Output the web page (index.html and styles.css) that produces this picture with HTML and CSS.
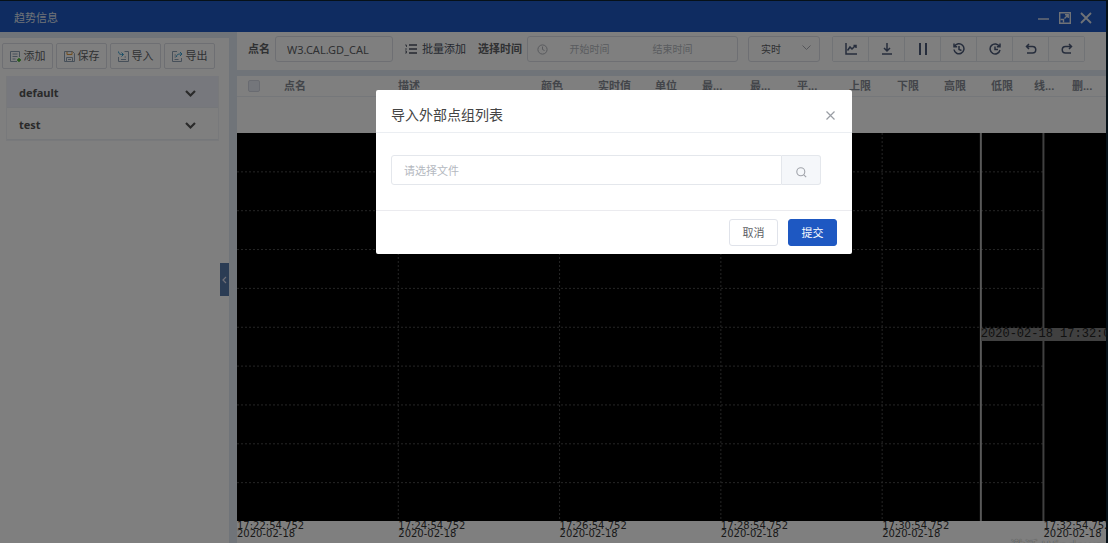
FILE: index.html
```html
<!DOCTYPE html>
<html lang="zh-CN">
<head>
<meta charset="utf-8">
<title>趋势信息</title>
<link rel="stylesheet" href="styles.css">
</head>
<body>
<div class="window">
  <header class="titlebar">
    <h1 class="title">趋势信息</h1>
    <div class="window-actions">
      <button class="bare" aria-label="最小化"><svg width="12" height="12" viewBox="0 0 12 12"><path d="M0 7h11" stroke="currentColor" stroke-width="1.4"/></svg></button>
      <button class="bare" aria-label="最大化"><svg width="12" height="12" viewBox="0 0 12 12"><path d="M.7.7h10.600v10.600H.7z" fill="none" stroke="currentColor" stroke-width="1.400"/><path d="M6 2.800h3.200V6M9 3L5.500 6.500M1.500 7.500h3v3" fill="none" stroke="currentColor" stroke-width="1.400"/></svg></button>
      <button class="bare" aria-label="关闭窗口"><svg width="12" height="12" viewBox="0 0 12 12"><path d="M1 1l10 10M11 1L1 11" stroke="currentColor" stroke-width="1.8"/></svg></button>
    </div>
  </header>
  <div class="content">
    <aside class="sidebar">
      <div class="group-actions">
        <button class="group-btn"><svg width="11" height="11" viewBox="0 0 11 11" fill="none" stroke="#8fa0b5"><path d="M9.500 6V.5h-9v10H7M2.500 3h5M2.500 5.500h5M2.500 8h3"/><path d="M9 7v4M7 9h4" stroke="#3fae2a" stroke-width="1.400"/></svg>添加</button>
        <button class="group-btn"><svg width="11" height="11" viewBox="0 0 11 11" fill="none" stroke="#8fa0b5"><path d="M.5.5h8l2 2v8H.5zM2.500 10V6.500h6V10M4 8.500h3"/><path d="M3 .5v3h5v-3" stroke="#e09a3c"/></svg>保存</button>
        <button class="group-btn"><svg width="11" height="11" viewBox="0 0 11 11" fill="none" stroke="#8fa0b5"><path d="M6.500.5h4v10H.5V6M3 8.500h5M6.500 6H8"/><path d="M.5.5c0 3 2 3 5 3M3.500 1.500l2 2-2 2" stroke="#3b9fd0"/></svg>导入</button>
        <button class="group-btn"><svg width="11" height="11" viewBox="0 0 11 11" fill="none" stroke="#8fa0b5"><path d="M5 .5H.5v10h9V7M2.500 4h1.500M2.500 6h1.500M2.500 8.500h4"/><path d="M4.500 6c0-3 2-3 5.500-3M8 1l2 2-2 2" stroke="#3b9fd0"/></svg>导出</button>
      </div>
      <ul class="groups">
        <li><button class="group active"><span>default</span><svg width="11" height="8" viewBox="0 0 11 8"><path d="M1 1l4.500 4.500L10 1" fill="none" stroke="currentColor" stroke-width="2.200"/></svg></button></li>
        <li><button class="group"><span>test</span><svg width="11" height="8" viewBox="0 0 11 8"><path d="M1 1l4.500 4.500L10 1" fill="none" stroke="currentColor" stroke-width="2.200"/></svg></button></li>
      </ul>
      <button class="collapse" aria-label="收起"><svg width="5" height="8" viewBox="0 0 5 8"><path d="M4 1L1 4l3 3" fill="none" stroke="currentColor" stroke-width="1.200"/></svg></button>
    </aside>
    <main class="main">
      <div class="toolbar">
        <label class="label" for="point">点名</label>
        <input class="field point" id="point" value="W3.CAL.GD_CAL">
        <button class="bare batch"><svg width="12" height="10" viewBox="0 0 12 10" fill="none" stroke="currentColor"><path d="M4 1h8M4 5h8M4 9h8" stroke-width="1.600"/><path d="M0 1h1.500v2M0 5h2M0 7h1.500v2H0" stroke-width=".8"/></svg>批量添加</button>
        <label class="label" for="start">选择时间</label>
        <div class="field range">
          <svg width="11" height="11" viewBox="0 0 11 11" fill="none" stroke="currentColor"><circle cx="5.500" cy="5.500" r="4.600"/><path d="M5.500 2.500v3l2 1"/></svg>
          <input class="range-input" id="start" placeholder="开始时间">
          <input class="range-input" aria-label="结束时间" placeholder="结束时间">
        </div>
        <div class="mode-wrap">
          <select class="field mode" aria-label="模式"><option>实时</option></select>
          <svg class="mode-arrow" width="9" height="6" viewBox="0 0 9 6"><path d="M.5.5l4 4 4-4" fill="none" stroke="#a8abb2"/></svg>
        </div>
        <div class="tools">
          <button class="tool" aria-label="曲线"><svg viewBox="0 0 12 12"><path d="M1 0v11h11M2.500 7.500L5 4l2 2 3.500-3.500M8.500 2.500h2.500V5"/></svg></button>
          <button class="tool" aria-label="下载"><svg viewBox="0 0 12 12"><path d="M6 0v8M3 5l3 3 3-3M1 11h10"/></svg></button>
          <button class="tool" aria-label="暂停"><svg viewBox="0 0 12 12"><path d="M3 0v12M9 0v12" stroke-width="2"/></svg></button>
          <button class="tool" aria-label="历史"><svg viewBox="0 0 12 12"><path d="M1.500 3.500A5 5 0 1 1 1 6.500M1 .5v3.200h3.200M6 3v3.500l2.500 1"/></svg></button>
          <button class="tool" aria-label="刷新"><svg viewBox="0 0 12 12"><path d="M10.500 3.500A5 5 0 1 0 11 7M11 .5v3.200H7.800M6 3.500v3h3"/></svg></button>
          <button class="tool" aria-label="撤销"><svg viewBox="0 0 12 12"><path d="M1 3.500h6.500a3 3 0 0 1 0 6.500H2M4 1L1.500 3.500 4 6"/></svg></button>
          <button class="tool" aria-label="重做"><svg viewBox="0 0 12 12"><path d="M11 3.500H4.500a3 3 0 0 0 0 6.500H10M8 1l2.500 2.500L8 6"/></svg></button>
        </div>
      </div>
      <section class="panel">
        <table class="points">
          <colgroup><col class="w47"><col class="w114"><col class="w143"><col class="w57"><col class="w57"><col class="w47"><col class="w48"><col class="w47"><col class="w52"><col class="w48"><col class="w47"><col class="w47"><col class="w43"><col class="w38"><col class="w34"></colgroup>
          <thead><tr>
            <th class="check"><input type="checkbox" class="box" aria-label="全选"></th>
            <th>点名</th><th>描述</th><th>颜色</th><th>实时值</th><th>单位</th><th>最...</th><th>最...</th><th>平...</th><th>上限</th><th>下限</th><th>高限</th><th>低限</th><th>线...</th><th>删...</th>
          </tr></thead>
        </table>
        <div class="chart">
          <svg class="plot" width="100%" height="100%">
            <g class="grid">
              <line x1="0" x2="92.8%" y1="10%" y2="10%"/><line x1="0" x2="92.8%" y1="20%" y2="20%"/><line x1="0" x2="92.8%" y1="30%" y2="30%"/><line x1="0" x2="92.8%" y1="40%" y2="40%"/><line x1="0" x2="92.8%" y1="50%" y2="50%"/><line x1="0" x2="92.8%" y1="60%" y2="60%"/><line x1="0" x2="92.8%" y1="70%" y2="70%"/><line x1="0" x2="92.8%" y1="80%" y2="80%"/><line x1="0" x2="92.8%" y1="90%" y2="90%"/>
              <line x1="18.56%" x2="18.56%" y1="0" y2="100%"/><line x1="37.12%" x2="37.12%" y1="0" y2="100%"/><line x1="55.68%" x2="55.68%" y1="0" y2="100%"/><line x1="74.24%" x2="74.24%" y1="0" y2="100%"/>
            </g>
            <line class="edge" x1="92.8%" x2="92.8%" y1="0" y2="100%"/>
            <line class="cursor" x1="85.6%" x2="85.6%" y1="0" y2="100%"/>
          </svg>
          <div class="cursor-time">2020-02-18 17:32:08</div>
        </div>
        <div class="axis">
          <div class="tick">17:22:54.752<br>2020-02-18</div><div class="tick">17:24:54.752<br>2020-02-18</div><div class="tick">17:26:54.752<br>2020-02-18</div><div class="tick">17:28:54.752<br>2020-02-18</div><div class="tick">17:30:54.752<br>2020-02-18</div><div class="tick">17:32:54.752<br>2020-02-18</div>
        </div>
        <div class="watermark">激活 Windows</div>
      </section>
    </main>
  </div>
</div>
<div class="overlay">
  <div class="dialog" role="dialog" aria-labelledby="dlg">
    <div class="dialog-head">
      <h2 class="dialog-title" id="dlg">导入外部点组列表</h2>
      <button class="bare close" aria-label="关闭"><svg width="9" height="9" viewBox="0 0 9 9"><path d="M.5.5l8 8M8.500.5l-8 8" stroke="currentColor" stroke-width="1.200"/></svg></button>
    </div>
    <div class="dialog-body">
      <input class="file" aria-label="文件" placeholder="请选择文件">
      <button class="search" aria-label="浏览"><svg width="11" height="11" viewBox="0 0 11 11" fill="none" stroke="currentColor" stroke-width="1.100"><circle cx="4.800" cy="4.800" r="4"/><path d="M7.800 7.800l2.400 2.400"/></svg></button>
    </div>
    <div class="dialog-foot">
      <button class="btn">取消</button>
      <button class="btn primary">提交</button>
    </div>
  </div>
</div>
</body>
</html>
```
FILE: styles.css
```css
* { box-sizing: border-box; }
body {
  margin: 0;
  height: 100vh;
  overflow: hidden;
  background: #0c2230;
  color: #606266;
  font: 11px/16px "Noto Sans", "Noto Sans CJK SC", sans-serif;
}
button, input, select { font: inherit; color: inherit; margin: 0; outline: none; }
button { padding: 0; display: flex; align-items: center; justify-content: center; }
svg { flex: none; display: block; }
.bare { border: 0; background: none; }

.window { height: 100vh; margin-right: 2px; padding-top: 1px; display: flex; flex-direction: column; }
.titlebar { height: 31px; flex: none; background: #1e58c2; color: #dfe4ee; display: flex; align-items: center; justify-content: space-between; padding: 2px 14px 0; }
.title { margin: 0; font-size: 11px; font-weight: 400; }
.window-actions { display: flex; gap: 9px; }
.content { flex: 1; min-height: 0; display: flex; background: #e0e9f2; }

.sidebar { width: 229px; flex: none; margin: 6px 8px 0 0; padding: 5px 10px 0 2px; background: #fff; position: relative; }
.group-actions { display: flex; gap: 3px; }
.group-btn { width: 51px; height: 26px; gap: 3px; background: #fff; border: 1px solid #dcdfe6; border-radius: 2px; }
.groups { list-style: none; margin: 7px 0 0 4px; padding: 0; border: 1px solid #f0f2f6; border-top: 0; }
.group { width: 100%; height: 32px; padding: 2px 22px 0 12px; justify-content: space-between; border: 0; border-bottom: 1px solid #ebeef5; background: #fff; font-size: 11px; font-weight: 700; color: #555; }
.group svg { margin-top: 2px; }
.group.active { background: #eef1fa; }
.collapse { position: absolute; right: 0; top: 225px; width: 9px; height: 33px; border: 0; background: #5778a8; color: #dde; }

.main { flex: 1; min-width: 0; display: flex; flex-direction: column; gap: 6px; }
.toolbar { height: 38px; flex: none; background: #fff; display: flex; align-items: center; padding: 0 21px 4px 11px; }
.label { font-weight: 700; margin-right: 5px; flex: none; }
.field { height: 26px; border: 1px solid #dcdfe6; border-radius: 3px; background: #fff; }
.point { width: 118px; flex: none; padding: 0 11px; margin-right: 12px; }
.batch { gap: 5px; margin-right: 12px; flex: none; color: #4a5060; }
.range { flex: 1; min-width: 0; display: flex; align-items: center; padding: 0 23px 0 9px; color: #b0b3ba; }
.range-input { flex: 1; min-width: 0; width: 40px; border: 0; padding: 0; text-align: center; background: none; font-size: 10px; }
.range-input::placeholder, .file::placeholder { color: #b4b8c0; opacity: 1; }
.mode-wrap { position: relative; margin: 0 12px 0 10px; flex: none; }
.mode { width: 72px; padding: 0 12px; appearance: none; font-size: 10px; display: block; }
.mode-arrow { position: absolute; right: 9px; top: 9px; }
.tools { display: flex; flex: none; border: 1px solid #e3e6ed; border-radius: 2px; }
.tool { width: 36px; height: 24px; border: 0; border-left: 1px solid #e3e6ed; background: #fff; color: #4c5a78; }
.tool:first-child { width: 35px; border-left: 0; }
.tool svg { width: 12px; height: 12px; fill: none; stroke: currentColor; stroke-width: 1.5; }

.panel { flex: 1; min-height: 0; background: #fff; position: relative; display: flex; flex-direction: column; overflow: hidden; }
.points { width: 100%; table-layout: fixed; border-collapse: collapse; margin-bottom: 36px; }
.points th { height: 20px; padding: 0; text-align: left; font-weight: 700; color: #868b94; border-bottom: 1px solid #ebeef5; white-space: nowrap; }
.points .check { padding-left: 11px; }
.box { appearance: none; display: block; width: 12px; height: 12px; border: 1px solid #d3d7e2; border-radius: 2px; background: #e9edf6; }
.w34 { width: 34px; } .w38 { width: 38px; } .w43 { width: 43px; } .w47 { width: 47px; } .w48 { width: 48px; }
.w52 { width: 52px; } .w57 { width: 57px; } .w114 { width: 114px; } .w143 { width: 143px; }
.chart { flex: 1; min-height: 0; background: #000; position: relative; }
.plot { position: absolute; inset: 0; }
.grid { stroke: #4c4c4c; stroke-dasharray: 2 2; }
.edge { stroke: #808080; stroke-width: 2; }
.cursor { stroke: #b0b0b0; stroke-width: 2; }
.cursor-time { position: absolute; left: 85.6%; right: 0; top: 50.4%; height: 13px; overflow: hidden; white-space: nowrap; background: #808080; color: #222; font: 12px/12px "Liberation Mono", monospace; }
.axis { height: 22px; flex: none; display: flex; font: 10px/8px "DejaVu Sans", sans-serif; color: #333; }
.tick { width: 18.56%; flex: none; padding-top: 1px; }
.watermark { position: absolute; right: 4px; bottom: -13px; font-size: 14px; line-height: 20px; color: #fff; text-shadow: 0 0 1px #777; }

.overlay { position: fixed; inset: 0; background: rgba(0, 0, 0, .5); display: flex; justify-content: center; align-items: flex-start; padding: 90px 0 0 120px; }
.dialog { width: 476px; background: #fff; border-radius: 2px; }
.dialog-head { height: 43px; padding: 8px 17px 0 15px; display: flex; align-items: center; justify-content: space-between; border-bottom: 1px solid #ebeef2; }
.dialog-title { margin: 0; font-size: 14px; line-height: 20px; font-weight: 400; color: #444; }
.close { color: #999da4; }
.dialog-body { padding: 22px 31px 25px 15px; display: flex; }
.file { flex: 1; min-width: 0; height: 30px; padding: 0 12px; border: 1px solid #e4e7ec; border-radius: 3px 0 0 3px; }
.search { width: 39px; height: 30px; padding-top: 5px; border: 1px solid #e4e7ec; border-left: 0; border-radius: 0 3px 3px 0; background: #f5f7fa; color: #a0a3aa; }
.dialog-foot { display: flex; justify-content: flex-end; gap: 10px; padding: 8px 15px; border-top: 1px solid #ebebef; }
.btn { width: 49px; height: 27px; border: 1px solid #e0e3ea; border-radius: 3px; background: #fff; }
.primary { background: #1e58c2; border-color: #1e58c2; color: #fff; }
```
